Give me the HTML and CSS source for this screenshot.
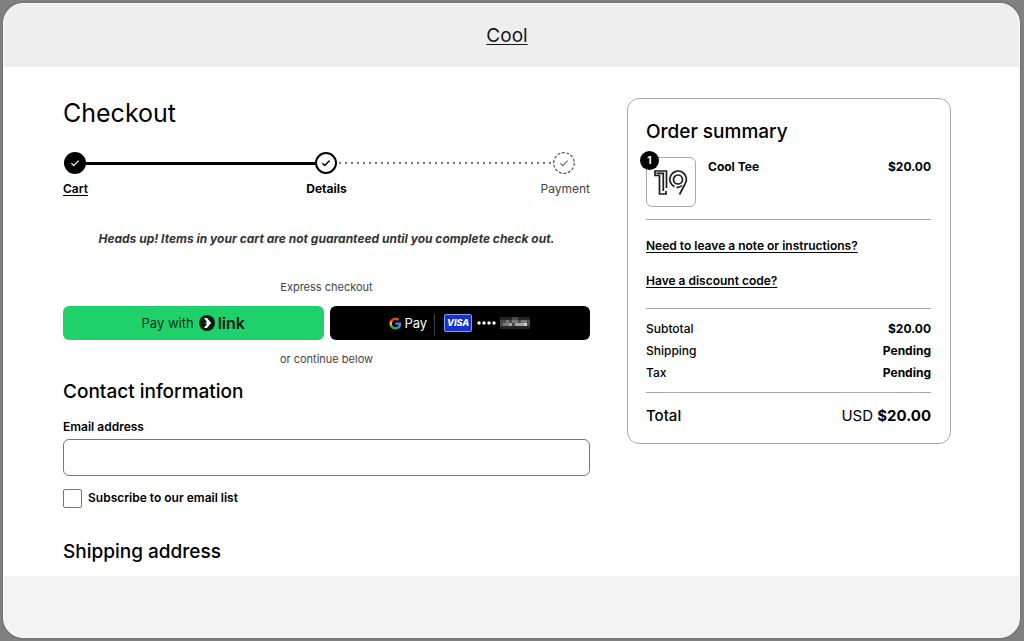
FILE: index.html
```
<!DOCTYPE html>
<html lang="en">
<head>
    <meta charset="UTF-8">
    <meta name="viewport" content="width=device-width, initial-scale=1.0">
    <title>Checkout - Cool</title>
    <link rel="stylesheet" href="styles.css">
</head>
<body>
<div class="window">
    <header class="site-header">
        <a href="#" class="store-name">Cool</a>
    </header>

    <main class="content">
        <div class="checkout">
            <h1>Checkout</h1>

            <!-- Progress -->
            <div class="progress">
                <svg class="step-icon" viewBox="0 0 22 22">
                    <circle cx="11" cy="11" r="11" fill="#000"/>
                    <path d="M7.4 11.2l2.4 2.4 4.8-5" fill="none" stroke="#fff" stroke-width="1.2"/>
                </svg>
                <span class="line line-done"></span>
                <svg class="step-icon" viewBox="0 0 22 22">
                    <circle cx="11" cy="11" r="10" fill="#fff" stroke="#000" stroke-width="2"/>
                    <path d="M7.4 11.2l2.4 2.4 4.8-5" fill="none" stroke="#000" stroke-width="1.4"/>
                </svg>
                <span class="line line-todo"></span>
                <svg class="step-icon" viewBox="0 0 22 22">
                    <circle cx="11" cy="11" r="10.3" fill="#fff" stroke="#555" stroke-width="1.2" stroke-dasharray="3 1.6"/>
                    <path d="M7.4 11.2l2.4 2.4 4.8-5" fill="none" stroke="#666" stroke-width="1.1"/>
                </svg>
            </div>
            <div class="step-labels">
                <a href="#" class="step-label">Cart</a>
                <span class="step-label current">Details</span>
                <span class="step-label upcoming">Payment</span>
            </div>

            <p class="notice">Heads up! Items in your cart are not guaranteed until you complete check out.</p>

            <!-- Express checkout -->
            <p class="hint">Express checkout</p>
            <div class="express">
                <button type="button" class="pay-btn pay-link">
                    <span>Pay with</span>
                    <svg class="link-logo" viewBox="0 0 16 16">
                        <circle cx="8" cy="8" r="8" fill="#011e0f"/>
                        <path d="M5 3h3l4.200 5L8 13H5l3.200-4.200L5.500 8l2.700-.8z" fill="#fff"/>
                    </svg>
                    <span class="link-word">link</span>
                </button>
                <button type="button" class="pay-btn pay-google">
                    <svg class="google-logo" viewBox="0 0 24 24">
                        <path fill="#4285f4" d="M22.6 12.3c0-.8-.1-1.5-.2-2.3H12v4.3h5.9a5 5 0 0 1-2.2 3.3v2.8h3.6c2.1-1.9 3.3-4.8 3.3-8.1z"/>
                        <path fill="#34a853" d="M12 23c3 0 5.5-1 7.3-2.6l-3.6-2.8c-1 .7-2.2 1.1-3.7 1.1-2.9 0-5.3-1.9-6.2-4.5H2.2V17A11 11 0 0 0 12 23z"/>
                        <path fill="#fbbc05" d="M5.8 14.2a6.6 6.6 0 0 1 0-4.3V7H2.2a11 11 0 0 0 0 10z"/>
                        <path fill="#ea4335" d="M12 5.4c1.6 0 3.1.6 4.2 1.6l3.2-3.1A11 11 0 0 0 2.2 7l3.6 2.9C6.7 7.3 9.1 5.4 12 5.4z"/>
                    </svg>
                    <span>Pay</span>
                    <span class="pay-divider"></span>
                    <span class="visa">VISA</span>
                    <svg class="card-dots" viewBox="0 0 20 4">
                        <circle cx="2" cy="2" r="1.7" fill="#fff"/>
                        <circle cx="7" cy="2" r="1.7" fill="#fff"/>
                        <circle cx="12" cy="2" r="1.7" fill="#fff"/>
                        <circle cx="17" cy="2" r="1.7" fill="#fff"/>
                    </svg>
                    <svg class="card-mask" viewBox="0 0 30 12">
                        <path fill="#262626" d="M0 0h30v12H0z"/>
                        <path fill="#4a4a4a" d="M0 3h30v6H0zM12 0h6v3h-6z"/>
                        <path fill="#777" d="M6 3h3v3H6zM12 3h6v3h-6zM21 3h6v3h-6zM3 6h9v3H3z"/>
                        <path fill="#a5a5a5" d="M9 6h3v3H9zM15 6h9v3h-9z"/>
                        <path fill="#ccc" d="M24 6h3v3h-3z"/>
                    </svg>
                </button>
            </div>
            <p class="hint">or continue below</p>

            <form>
                <h2>Contact information</h2>
                <label class="field-label" for="email">Email address</label>
                <input type="email" class="text-field" id="email">
                <div class="check-row">
                    <input type="checkbox" class="check" id="subscribe">
                    <label for="subscribe">Subscribe to our email list</label>
                </div>
                <h2>Shipping address</h2>
            </form>
        </div>

        <!-- Order summary -->
        <aside class="summary">
            <h2>Order summary</h2>
            <div class="item">
                <div class="thumb">
                    <svg viewBox="0 0 36 28" fill="none" stroke="#1c1c1c" stroke-width="1.7">
                        <path d="M13.500 20V3H2v4.500h4.500v18.500H13v-3"/>
                        <path d="M3.500 5.300h6.800V23"/>
                        <circle cx="25" cy="11.500" r="4.500"/>
                        <path d="M21.500 18.800A8.300 8.300 0 1 1 32 16L26.500 26.500"/>
                        <path d="M23.500 19.300c2 .2 4-.4 5.500-1.800"/>
                    </svg>
                    <span class="qty">1</span>
                </div>
                <span class="item-name">Cool Tee</span>
                <span class="item-price">$20.00</span>
            </div>
            <div class="extras">
                <a href="#">Need to leave a note or instructions?</a>
                <a href="#">Have a discount code?</a>
            </div>
            <dl class="costs">
                <div><dt>Subtotal</dt><dd>$20.00</dd></div>
                <div><dt>Shipping</dt><dd>Pending</dd></div>
                <div><dt>Tax</dt><dd>Pending</dd></div>
            </dl>
            <div class="total">
                <span class="total-label">Total</span>
                <span>USD <strong>$20.00</strong></span>
            </div>
        </aside>
    </main>

    <footer class="site-footer"></footer>
</div>
</body>
</html>
```
FILE: styles.css
```
* {
    box-sizing: border-box;
}
body {
    margin: 0;
    padding: 3px 4px 3px 3px;
    min-height: 100vh;
    display: flex;
    background-color: #808080;
    font-family: Inter, "Liberation Sans", sans-serif;
    font-size: 12px;
    line-height: 20px;
    color: #000;
}
h1, h2, p, dl, dd {
    margin: 0;
}
a {
    color: inherit;
    text-underline-offset: 2px;
}
.window {
    flex: 1;
    display: flex;
    flex-direction: column;
    background-color: #fff;
    border: 1px solid #f8f8f8;
    border-radius: 20px;
    overflow: hidden;
    box-shadow: 0 0 2px #555;
}
.site-header {
    height: 63px;
    display: flex;
    align-items: center;
    justify-content: center;
    padding: 0 68px 0 59px;
    background-color: #eee;
}
.store-name {
    font-size: 19px;
    color: #111820;
}
.site-footer {
    flex: 1;
    min-height: 61px;
    background-color: #f3f3f3;
}
.content {
    display: grid;
    grid-template-columns: minmax(0, 1fr) 324px;
    align-items: start;
    gap: 37px;
    padding: 31px 68px 8px 59px;
}
h1 {
    font-size: 25px;
    line-height: 30px;
    font-weight: 400;
}
h2 {
    font-size: 19px;
    line-height: 32px;
    font-weight: 500;
}

/* progress */
.progress {
    display: flex;
    align-items: center;
    margin-top: 24px;
    padding: 0 15px 0 1px;
}
.step-icon {
    flex: none;
    width: 22px;
    height: 22px;
}
.line {
    flex: 1;
}
.line-done {
    height: 3px;
    flex-grow: 229;
    background-color: #000;
}
.line-todo {
    height: 2px;
    flex-grow: 216;
    background: radial-gradient(circle, #777 1px, transparent 1px) 0 0 / 6px 2px;
}
.step-labels {
    display: grid;
    grid-template-columns: 1fr auto 1fr;
    margin-top: 5px;
}
.step-label {
    justify-self: start;
    font-weight: 600;
}
.current {
    font-weight: 700;
}
.upcoming {
    justify-self: end;
    font-weight: 400;
    color: #444;
}
.notice {
    margin-top: 30px;
    text-align: center;
    font-weight: 700;
    font-style: italic;
    color: #333;
}

/* express checkout */
.hint {
    margin-top: 28px;
    text-align: center;
    font-size: 11px;
    color: #444;
}
.express {
    display: flex;
    gap: 6px;
    margin-top: 9px;
}
.express + .hint {
    margin-top: 9px;
}
.pay-btn {
    flex: 1;
    display: flex;
    align-items: center;
    justify-content: center;
    height: 34px;
    padding: 0;
    border: none;
    border-radius: 6px;
    font-family: inherit;
    font-size: 13px;
    cursor: pointer;
}
.pay-link {
    background-color: #1fd16a;
    color: #04301a;
}
.link-logo {
    width: 16px;
    height: 16px;
    margin: 0 3px 0 5px;
}
.link-word {
    font-size: 16px;
    font-weight: 600;
    color: #011e0f;
}
.pay-google {
    background-color: #000;
    color: #fff;
}
.google-logo {
    width: 13px;
    height: 13px;
    margin-right: 2px;
}
.pay-divider {
    width: 1px;
    height: 22px;
    margin: 4px 9px 0 7px;
    background-color: #444;
}
.visa {
    width: 28px;
    height: 18px;
    border: 1px solid #8a9be8;
    border-radius: 2px;
    background-color: #1434cb;
    font-size: 9px;
    line-height: 16px;
    font-weight: 800;
    font-style: italic;
}
.card-dots {
    width: 20px;
    height: 4px;
    margin: 0 3px 0 5px;
}
.card-mask {
    width: 30px;
    height: 12px;
}

/* contact form */
form h2 {
    margin-top: 7px;
}
.field-label {
    display: block;
    margin-top: 9px;
    font-weight: 600;
}
.text-field {
    display: block;
    width: 100%;
    height: 37px;
    margin-top: 2px;
    padding: 0 12px;
    border: 1px solid #777;
    border-radius: 6px;
    font: inherit;
}
.check-row {
    display: flex;
    align-items: center;
    gap: 6px;
    margin: 12px 0 28px;
    font-weight: 600;
}
.check {
    appearance: none;
    width: 19px;
    height: 19px;
    margin: 0;
    border: 1px solid #777;
    border-radius: 2px;
}
.check:checked {
    background-color: #000;
}

/* order summary */
.summary {
    padding: 17px 19px 17px 18px;
    border: 1px solid #aaa;
    border-radius: 12px;
}
.item {
    display: flex;
    gap: 12px;
    margin-top: 9px;
    padding-bottom: 12px;
    border-bottom: 1px solid #aaa;
    font-weight: 700;
}
.thumb {
    position: relative;
    display: flex;
    align-items: center;
    justify-content: center;
    width: 50px;
    height: 50px;
    border: 1px solid #aaa;
    border-radius: 6px;
}
.thumb svg {
    width: 36px;
    height: 28px;
}
.qty {
    position: absolute;
    top: -7px;
    left: -7px;
    width: 19px;
    height: 19px;
    border-radius: 50%;
    background-color: #000;
    color: #fff;
    font-size: 10px;
    line-height: 19px;
    text-align: center;
}
.item-price {
    margin-left: auto;
}
.extras {
    display: flex;
    flex-direction: column;
    align-items: flex-start;
    gap: 15px;
    padding: 16px 0 17px;
    border-bottom: 1px solid #aaa;
    font-weight: 600;
}
.costs {
    padding: 9px 0 8px;
    border-bottom: 1px solid #aaa;
    line-height: 22px;
}
.costs div {
    display: flex;
    justify-content: space-between;
}
.costs dt {
    font-weight: 500;
}
.costs dd {
    font-weight: 700;
}
.total {
    display: flex;
    justify-content: space-between;
    padding-top: 13px;
    font-size: 15px;
}
.total-label {
    font-weight: 500;
}
```
